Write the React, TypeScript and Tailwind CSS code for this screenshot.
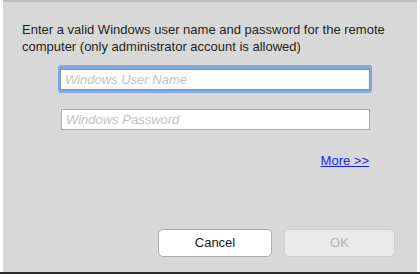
import React from 'react';

export default function App() {
  return (
    <div className="w-[420px] h-[278px] bg-white flex flex-col" style={{ fontFamily: '"Liberation Sans", Arial, sans-serif' }}>
      <div className="flex-1 mx-[3px] bg-[#d8d8d8] border-t-2 border-[#bdbdbd] flex flex-col">
        <p className="pl-[19px] pt-[19px] pr-4 text-[13px] leading-[17px] text-[#1f1f1f]">
          Enter a valid Windows user name and password for the remote computer (only administrator account is allowed)
        </p>

        <div className="mt-[10px] ml-[55px] w-[314px] flex flex-col">
          <div className="rounded-[3px] p-[2px] bg-[#7fa8e0]">
            <input
              type="text"
              placeholder="Windows User Name"
              className="w-full h-[21px] bg-white border border-[#6d93c8] px-[4px] text-[13px] italic text-[#222] placeholder:text-[#c2c2c2] outline-none"
            />
          </div>
          <input
            type="password"
            placeholder="Windows Password"
            className="mt-[16px] ml-[3px] w-[309px] h-[21px] bg-white border border-[#ababab] px-[4px] text-[13px] italic text-[#222] placeholder:text-[#c2c2c2] outline-none"
          />
        </div>

        <div className="mt-[24px] flex justify-end pr-[48px]">
          <a href="#" className="text-[13px] leading-[14px] text-[#1d1dff] underline">More &gt;&gt;</a>
        </div>

        <div className="mt-auto mb-[15px] flex justify-end gap-[12px] pr-[22px]">
          <button className="w-[114px] h-[28px] rounded-[5px] bg-white border border-[#adadad] text-[13px] text-[#1a1a1a]">
            Cancel
          </button>
          <button disabled className="w-[111px] h-[28px] rounded-[5px] bg-[#eaeaea] border border-[#cfcfcf] text-[13px] text-[#b3b3b3]">
            OK
          </button>
        </div>
      </div>
      <div className="h-[2px] bg-[#2b2b2b]" />
      <div className="h-[4px] bg-white" />
    </div>
  );
}
